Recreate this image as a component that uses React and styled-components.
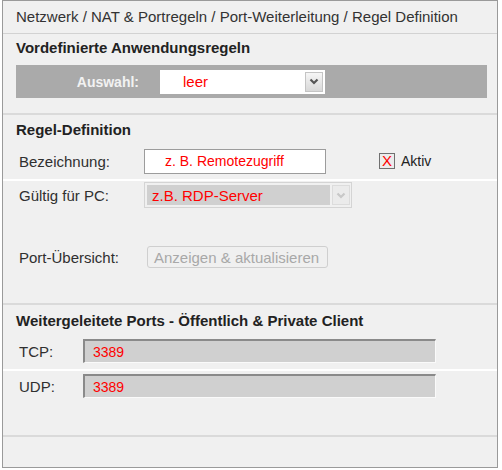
import React from "react";
import styled, { createGlobalStyle } from "styled-components";

const GlobalStyle = createGlobalStyle`
  body {
    margin: 0;
    background: #ffffff;
    font-family: "Liberation Sans", Arial, sans-serif;
  }
`;

const Frame = styled.div`
  margin-left: 2px;
  width: 494px;
  height: 466px;
  border: 1px solid #9a9a9a;
  background: #f0f0f0;
  display: flex;
  flex-direction: column;
  color: #2a2a2a;
`;

const Header = styled.div`
  height: 32px;
  line-height: 32px;
  padding-left: 13px;
  font-size: 15px;
  color: #333;
  border-bottom: 1px solid #d2d2d2;
`;

const Section = styled.div`
  padding: 0 0 ${(p) => p.$bottom || 0}px;
  border-bottom: 2px solid #dadada;
`;

const Title = styled.div`
  margin: ${(p) => p.$top}px 0 ${(p) => p.$bottom}px 13px;
  font-size: 15px;
  font-weight: bold;
  line-height: 16px;
  color: #222;
`;

const Bar = styled.div`
  margin: 0 10px 0 13px;
  height: 33px;
  background: #aaaaaa;
  display: flex;
  align-items: center;
`;

const BarLabel = styled.div`
  width: 123px;
  font-size: 14px;
  font-weight: bold;
  color: #f2f2f2;
  text-align: right;
`;

const WhiteSelect = styled.div`
  margin-left: 21px;
  width: 165px;
  height: 24px;
  background: #fff;
  display: flex;
  align-items: center;
  justify-content: space-between;
  box-sizing: border-box;
  padding: 0 2px 0 23px;
`;

const RedText = styled.span`
  color: #ff0000;
  font-size: ${(p) => p.$size || 14}px;
`;

const ArrowButton = styled.div`
  width: 18px;
  height: 20px;
  box-sizing: border-box;
  border: 1px solid ${(p) => (p.$disabled ? "#dcdcdc" : "#c4c4c4")};
  background: ${(p) =>
    p.$disabled ? "#ebebeb" : "linear-gradient(#f6f6f6, #d8d8d8)"};
  display: flex;
  align-items: center;
  justify-content: center;
`;

const Row = styled.div`
  display: flex;
  align-items: center;
  height: ${(p) => p.$height}px;
  margin-top: ${(p) => p.$top || 0}px;
  padding-left: 16px;
  border-bottom: ${(p) => (p.$line ? "2px solid #ffffff" : "none")};
`;

const Label = styled.div`
  width: ${(p) => p.$width}px;
  flex-shrink: 0;
  font-size: 15px;
  color: #2f2f2f;
`;

const TextInput = styled.div`
  width: 182px;
  height: 25px;
  box-sizing: border-box;
  border: 1px solid #9c9c9c;
  background: #fff;
  display: flex;
  align-items: center;
  padding-left: 20px;
`;

const CheckBox = styled.div`
  margin-left: 53px;
  width: 16px;
  height: 16px;
  box-sizing: border-box;
  border: 1px solid #707070;
  background: #ececec;
  color: #ff0000;
  font-size: 15px;
  line-height: 14px;
  text-align: center;
`;

const CheckLabel = styled.span`
  margin-left: 6px;
  font-size: 14px;
  color: #222;
`;

const DisabledSelect = styled.div`
  width: 208px;
  height: 26px;
  box-sizing: border-box;
  border: 1px solid #d4d4d4;
  padding: 2px 1px 2px 2px;
  display: flex;
  gap: 2px;
`;

const DisabledField = styled.div`
  flex: 1;
  background: #d0d0d0;
  display: flex;
  align-items: center;
  padding-left: 5px;
`;

const DisabledButton = styled.button`
  margin-left: 3px;
  width: 181px;
  height: 22px;
  border: 1px solid #cfcfcf;
  border-radius: 3px;
  background: #f0f0f0;
  color: #a8a8a8;
  font-family: inherit;
  font-size: 15px;
  text-align: left;
  padding: 0 0 0 6px;
`;

const PortInput = styled.div`
  width: 353px;
  height: 24px;
  box-sizing: border-box;
  border-top: 2px solid #8a8a8a;
  border-left: 2px solid #8a8a8a;
  border-right: 1px solid #fafafa;
  border-bottom: 1px solid #fafafa;
  background: #d0d0d0;
  display: flex;
  align-items: center;
  padding-left: 8px;
`;

const Footer = styled.div`
  flex: 1;
`;

const Chevron = ({ color }) => (
  <svg width="10" height="7" viewBox="0 0 10 7">
    <polyline points="1.5,1.5 5,5 8.5,1.5" fill="none" stroke={color} strokeWidth="2.2" />
  </svg>
);

export default function App() {
  return (
    <>
      <GlobalStyle />
      <Frame>
        <Header>Netzwerk / NAT &amp; Portregeln / Port-Weiterleitung / Regel Definition</Header>

        <Section $bottom={15}>
          <Title $top={6} $bottom={9}>Vordefinierte Anwendungsregeln</Title>
          <Bar>
            <BarLabel>Auswahl:</BarLabel>
            <WhiteSelect>
              <RedText $size={15}>leer</RedText>
              <ArrowButton>
                <Chevron color="#555" />
              </ArrowButton>
            </WhiteSelect>
          </Bar>
        </Section>

        <Section $bottom={32}>
          <Title $top={7} $bottom={5}>Regel-Definition</Title>
          <Row $height={36} $line>
            <Label $width={125}>Bezeichnung:</Label>
            <TextInput>
              <RedText>z. B. Remotezugriff</RedText>
            </TextInput>
            <CheckBox>X</CheckBox>
            <CheckLabel>Aktiv</CheckLabel>
          </Row>
          <Row $height={28}>
            <Label $width={125}>Gültig für PC:</Label>
            <DisabledSelect>
              <DisabledField>
                <RedText $size={15}>z.B. RDP-Server</RedText>
              </DisabledField>
              <ArrowButton $disabled>
                <Chevron color="#c8c8c8" />
              </ArrowButton>
            </DisabledSelect>
          </Row>
          <Row $height={28} $top={34}>
            <Label $width={125}>Port-Übersicht:</Label>
            <DisabledButton disabled>Anzeigen &amp; aktualisieren</DisabledButton>
          </Row>
        </Section>

        <Section $bottom={34}>
          <Title $top={8} $bottom={4}>Weitergeleitete Ports - Öffentlich &amp; Private Client</Title>
          <Row $height={36} $line>
            <Label $width={64}>TCP:</Label>
            <PortInput>
              <RedText>3389</RedText>
            </PortInput>
          </Row>
          <Row $height={30}>
            <Label $width={64}>UDP:</Label>
            <PortInput>
              <RedText>3389</RedText>
            </PortInput>
          </Row>
        </Section>

        <Footer />
      </Frame>
    </>
  );
}
